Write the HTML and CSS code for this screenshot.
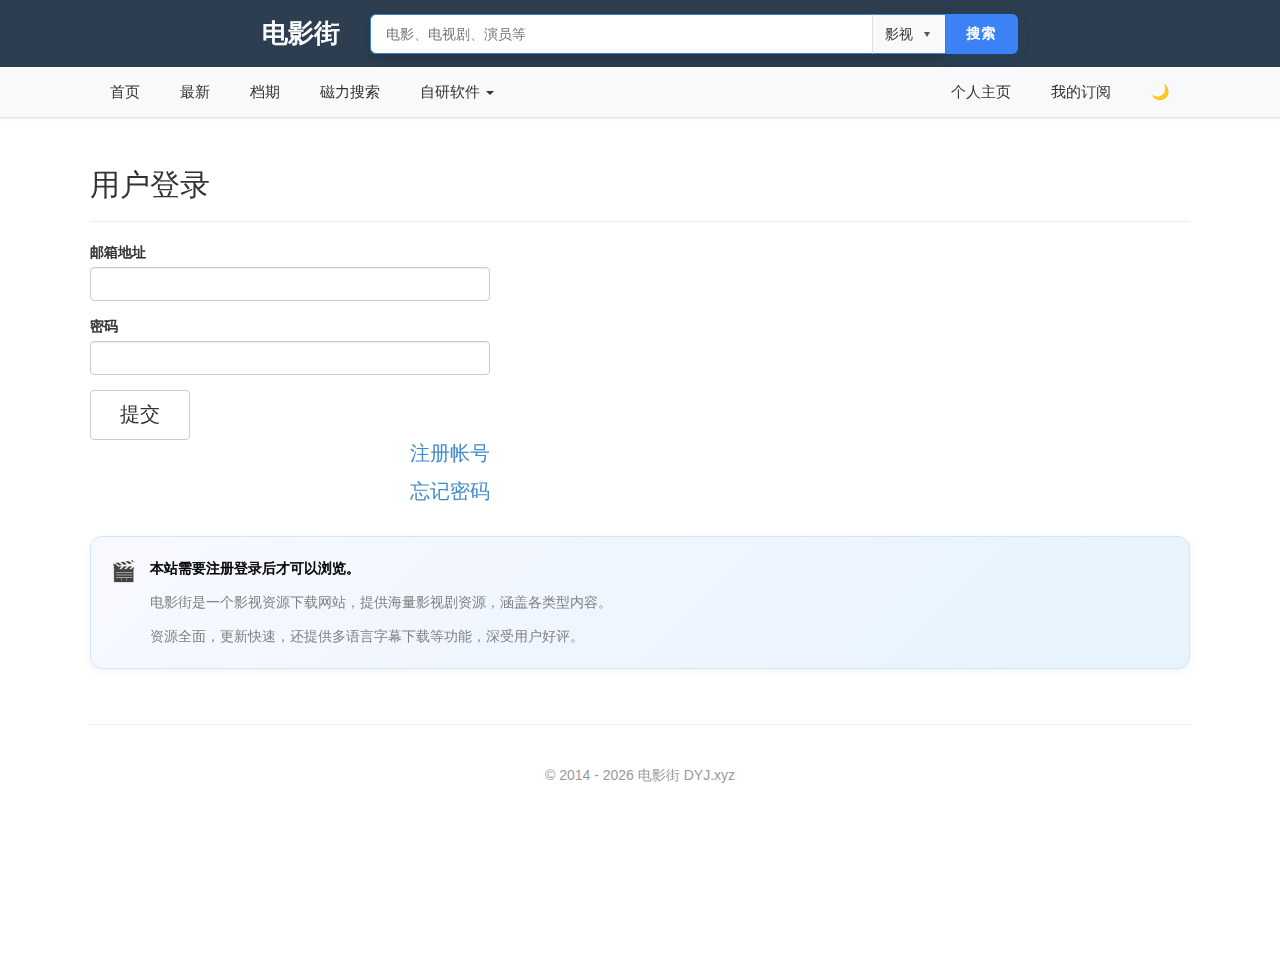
FILE: index.html
```html
<!DOCTYPE html>
<html lang="zh-CN">
<head>
<meta charset="utf-8">
<title>用户登录 - 电影街</title>
<link rel="stylesheet" href="styles.css">
</head>
<body>
<header class="top">
  <a class="brand">电影街</a>
  <form class="search">
    <input class="search-input" type="text" placeholder="电影、电视剧、演员等">
    <div class="search-type">影视<svg width="6" height="5" viewBox="0 0 6 5"><path d="M0 0h6L3 5z" fill="#555"/></svg></div>
    <button class="search-btn" type="button">搜索</button>
  </form>
</header>
<nav class="nav">
  <div class="nav-inner">
    <a>首页</a><a>最新</a><a>档期</a><a>磁力搜索</a><a>自研软件<i class="caret"></i></a>
    <a class="right">个人主页</a><a>我的订阅</a><a class="theme">🌙</a>
  </div>
</nav>
<main class="container">
  <h1 class="title">用户登录</h1>
  <form class="login">
    <label class="label" for="email">邮箱地址</label>
    <input class="field" id="email" type="text">
    <label class="label" for="password">密码</label>
    <input class="field" id="password" type="password">
    <button class="submit" type="button">提交</button>
    <div class="links"><a>注册帐号</a><a>忘记密码</a></div>
  </form>
  <section class="notice">
    <span class="notice-icon">🎬</span>
    <div class="notice-text">
      <strong>本站需要注册登录后才可以浏览。</strong>
      <p>电影街是一个影视资源下载网站，提供海量影视剧资源，涵盖各类型内容。</p>
      <p>资源全面，更新快速，还提供多语言字幕下载等功能，深受用户好评。</p>
    </div>
  </section>
  <footer class="footer">© 2014 - 2026 电影街 DYJ.xyz</footer>
</main>
</body>
</html>
```
FILE: styles.css
```css
* { box-sizing: border-box; }
body {
  margin: 0;
  background: #fff;
  color: #333;
  font: 14px/20px "Liberation Sans", "WenQuanYi Zen Hei", "Noto Sans CJK SC", sans-serif;
}
input, button { font-family: inherit; }
.top {
  display: flex;
  height: 67px;
  padding: 14px 262px 0;
  background: #2c3e50;
}
.brand {
  width: 108px;
  color: #fff;
  font-size: 26px;
  font-weight: bold;
  line-height: 39px;
  -webkit-text-stroke: .9px;
}
.search {
  display: flex;
  width: 648px;
  height: 40px;
  border-radius: 6px;
  box-shadow: 0 4px 12px rgba(0, 0, 0, .15);
}
.search-input {
  width: 502px;
  padding: 0 15px;
  border: 1px solid #3b82c6;
  border-right: 0;
  border-radius: 6px 0 0 6px;
  background: #fff;
  font-size: 14px;
  outline: 0;
}
.search-input::placeholder { color: #757575; }
.search-type {
  position: relative;
  display: flex;
  align-items: center;
  gap: 11px;
  width: 74px;
  padding-left: 12px;
  border: 1px solid #3b82c6;
  border-left-color: #ddd;
  background: #f8f9fa;
}
.search-btn {
  width: 73px;
  margin-left: -1px;
  padding: 0;
  border: 0;
  border-radius: 0 6px 6px 0;
  background: #3b82f6;
  box-shadow: 0 4px 12px rgba(59, 130, 246, .15);
  color: #fff;
  font-size: 14px;
  font-weight: bold;
  letter-spacing: 1px;
  -webkit-text-stroke: .6px;
}
.nav {
  position: relative;
  height: 51px;
  border-bottom: 1px solid #e0e2e5;
  background: #f8f9fb;
  box-shadow: 0 1px 3px rgba(0, 0, 0, .08);
}
.nav-inner {
  display: flex;
  width: 1100px;
  margin: 0 auto;
  font-size: 15px;
  line-height: 50px;
}
.nav-inner a { padding: 0 20px; }
.nav-inner .right { margin-left: auto; }
.caret {
  display: inline-block;
  margin-left: 6px;
  border: 4px solid transparent;
  border-top-color: #333;
  border-bottom: 0;
  vertical-align: middle;
}
.container { width: 1100px; margin: 0 auto; }
.title {
  height: 60px;
  margin: 44px 0 20px;
  padding-top: 6px;
  border-bottom: 1px solid #eee;
  font-size: 30px;
  font-weight: normal;
  line-height: 33px;
}
.login { width: 400px; }
.label {
  display: block;
  margin-bottom: 5px;
  font-weight: bold;
  -webkit-text-stroke: .6px;
}
.field {
  display: block;
  width: 400px;
  height: 34px;
  margin-bottom: 15px;
  padding: 6px 12px;
  border: 1px solid #ccc;
  border-radius: 4px;
  box-shadow: inset 0 1px 1px rgba(0, 0, 0, .075);
}
.submit {
  display: block;
  width: 100px;
  height: 50px;
  padding: 0 0 1px;
  border: 1px solid #ccc;
  border-radius: 4px;
  background: #fff;
  color: #333;
  font-size: 20px;
}
.links {
  display: flex;
  flex-direction: column;
  gap: 12px;
  align-items: flex-end;
  color: #428bca;
  font-size: 20px;
  line-height: 26px;
}
.notice {
  display: flex;
  height: 133px;
  margin-top: 32px;
  padding: 19px 20px;
  border: 1px solid #d0e8f2;
  border-radius: 12px;
  background: linear-gradient(135deg, #f8f9ff 0%, #f0f6ff 40%, #e6f3fd 100%);
  box-shadow: 0 2px 8px rgba(0, 0, 0, .05);
}
.notice-icon {
  width: 39px;
  padding-top: 1px;
  color: #333;
  font-size: 20px;
  line-height: 28px;
}
.notice-text { line-height: 24px; color: #808080; }
.notice-text strong { display: block; color: #000; -webkit-text-stroke: .6px; }
.notice-text p { margin: 10px 0 0; }
.footer {
  margin-top: 55px;
  padding-top: 40px;
  border-top: 1px solid #eee;
  color: #999;
  text-align: center;
}
```
